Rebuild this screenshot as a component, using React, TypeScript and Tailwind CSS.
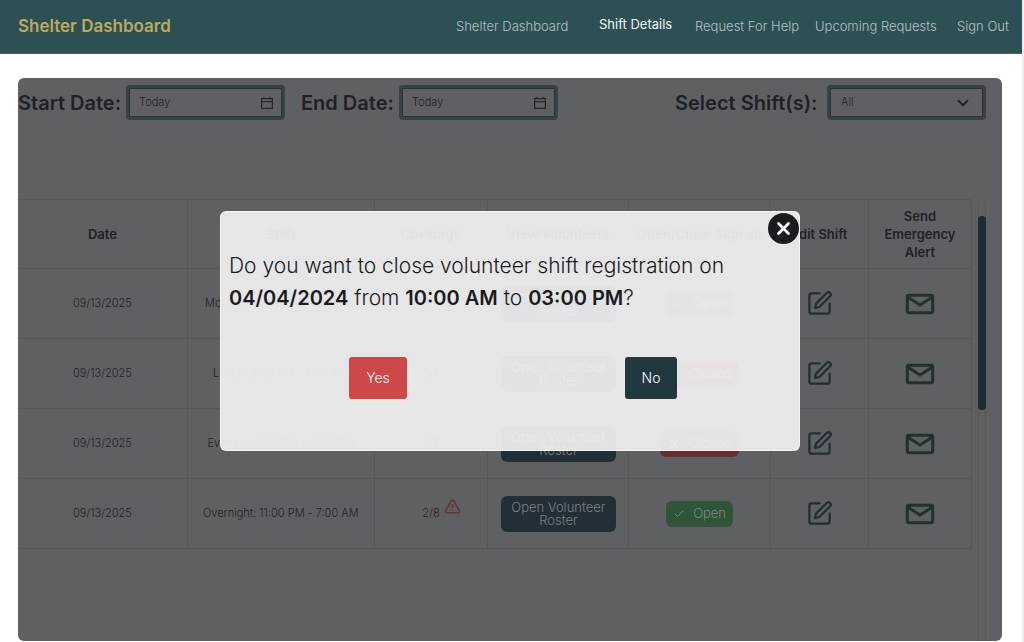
import { Check, ChevronDown, SquarePen, TriangleAlert, X } from "lucide-react";

type Shift = { label: string; coverage: string; open: boolean; alert?: boolean };

const shifts: Shift[] = [
  { label: "Morning: 10:00 AM - 2:00 PM", coverage: "7/8", open: true },
  { label: "Lunch: 2:00 PM - 6:00 PM", coverage: "5/8", open: false },
  { label: "Evening: 6:00 PM - 11:00 PM", coverage: "8/8", open: false },
  { label: "Overnight: 11:00 PM - 7:00 AM", coverage: "2/8", open: true, alert: true },
];

const links = ["Shelter Dashboard", "Shift Details", "Request For Help", "Upcoming Requests", "Sign Out"];

const cell = "h-[70px] border-r border-b border-[#55575b] p-0 text-center";

const field = "h-[35px] w-[159px] rounded border-3 border-[#384147] inset-ring inset-ring-[#28323a]";

function MailIcon() {
  return (
    <svg viewBox="0 0 30 22" className="mx-auto h-[22px] w-[30px]" fill="none" stroke="#22302f" strokeWidth="3">
      <rect x="2.3" y="2.3" width="25.4" height="17.4" rx="1.6" />
      <path d="M2.5 4 15 12 27.5 4" />
    </svg>
  );
}

function CalendarIcon() {
  return (
    <svg viewBox="0 0 14 14" className="size-[14px] shrink-0" fill="none" stroke="#25282c" strokeWidth="1.2">
      <rect x="1.6" y="2.6" width="10.8" height="9.8" />
      <path d="M1.6 5.6h10.8M4 .8v1.8M10 .8v1.8" />
    </svg>
  );
}

function DateField({ id }: { id: string }) {
  return (
    <div className={`${field} flex items-center pr-2 pl-[10px]`}>
      <input
        id={id}
        type="text"
        defaultValue="Today"
        className="w-full min-w-0 bg-transparent text-[11px] font-light text-[#202226] outline-none"
      />
      <CalendarIcon />
    </div>
  );
}

function Header() {
  return (
    <header className="flex h-[54px] items-center justify-between border-b border-[#496668] bg-[#2d5054] pl-[18px]">
      <h1 className="pt-px text-[17px] font-semibold text-[#b9ab5f]">Shelter Dashboard</h1>
      <nav className="grid grid-cols-[143px_96px_120px_142px_65px] items-center text-[13px] font-light whitespace-nowrap text-[#b5c0c5]">
        {links.map((link) => (
          <a
            key={link}
            href="#"
            className={link === "Shift Details" ? "pb-1 font-normal text-[#eef5f5]" : ""}
          >
            {link}
          </a>
        ))}
      </nav>
    </header>
  );
}

function Filters() {
  return (
    <div className="flex items-center justify-between pt-[7px] pr-4 text-[20px] font-semibold whitespace-nowrap text-[#1f2126]">
      <div className="flex items-center">
        <label htmlFor="start" className="w-[108px]">Start Date:</label>
        <DateField id="start" />
        <label htmlFor="end" className="ml-4 w-[98px]">End Date:</label>
        <DateField id="end" />
      </div>
      <div className="flex items-center">
        <label htmlFor="shift" className="w-[152px]">Select Shift(s):</label>
        <div className="relative">
          <select
            id="shift"
            className={`${field} block appearance-none bg-transparent pl-[11px] text-[11px] font-light text-[#202226] outline-none`}
          >
            <option>All</option>
          </select>
          <ChevronDown size={18} strokeWidth={2.5} className="pointer-events-none absolute top-[9px] right-[14px] text-[#202226]" />
        </div>
      </div>
    </div>
  );
}

function ShiftTable() {
  return (
    <table className="w-full flex-1 table-fixed border-separate border-spacing-0 text-[#1f2126]">
      <colgroup>
        <col className="w-[17.8%]" />
        <col className="w-[19.6%]" />
        <col className="w-[11.9%]" />
        <col className="w-[14.8%]" />
        <col className="w-[14.8%]" />
        <col className="w-[10.3%]" />
        <col className="w-[10.8%]" />
      </colgroup>
      <thead>
        <tr className="text-[13px] leading-[18px]">
          {["Date", "Shift", "Coverage", "View Volunteers", "Open/Close Sign up", "Edit Shift"].map((h) => (
            <th key={h} className={`${cell} border-t font-semibold`}>{h}</th>
          ))}
          <th className={`${cell} rounded-tr border-t px-3 font-semibold`}>Send Emergency Alert</th>
        </tr>
      </thead>
      <tbody>
        {shifts.map((s) => (
          <tr key={s.label} className="text-[11px] font-light">
            <td className={cell}>09/13/2025</td>
            <td className={cell}>{s.label}</td>
            <td className={cell}>
              <span className="relative">
                {s.coverage}
                {s.alert && (
                  <TriangleAlert size={17} className="absolute -top-2 left-full ml-1 text-[#6b2d30]" aria-label="Low coverage" />
                )}
              </span>
            </td>
            <td className={cell}>
              <button className="h-9 w-[115px] rounded-md bg-[#222f35] px-2 text-[13px] leading-[13px] font-light text-[#7b8084]">
                Open Volunteer Roster
              </button>
            </td>
            <td className={cell}>
              {s.open ? (
                <button className="inline-flex h-[26px] items-center gap-2 rounded-md bg-[#2f5438] px-[7px] text-[13px] font-light text-[#7b8a80]">
                  <Check size={12} />Open
                </button>
              ) : (
                <button className="inline-flex h-[26px] items-center gap-2 rounded-md bg-[#6b2d2f] px-[7px] text-[13px] font-light text-[#8e7b7d]">
                  <X size={14} />Closed
                </button>
              )}
            </td>
            <td className={cell}>
              <button aria-label="Edit shift" className="mx-auto block">
                <SquarePen size={27} className="text-[#222d34]" />
              </button>
            </td>
            <td className={cell}>
              <button aria-label="Send emergency alert" className="mx-auto block">
                <MailIcon />
              </button>
            </td>
          </tr>
        ))}
      </tbody>
    </table>
  );
}

function ConfirmDialog() {
  return (
    <div
      role="dialog"
      aria-label="Close registration"
      className="relative h-60 w-[580px] rounded-md border border-white/60 bg-[#f2f2f2]/92 px-2 pt-[38px] text-[#1a1b20]"
    >
      <button aria-label="Close" className="absolute top-0 right-0">
        <svg viewBox="0 0 32 32" className="size-8">
          <circle cx="16.5" cy="16.5" r="15.5" fill="#1a1b20" />
          <path d="M11.5 11.5 21.5 21.5M21.5 11.5 11.5 21.5" stroke="#fff" strokeWidth="2.8" strokeLinecap="round" />
        </svg>
      </button>
      <p className="text-[21px] leading-8 font-light">
        Do you want to close volunteer shift registration on{" "}
        <b className="text-[20px] font-semibold">04/04/2024</b> from{" "}
        <b className="text-[20px] font-semibold">10:00 AM</b> to{" "}
        <b className="text-[20px] font-semibold">03:00 PM</b>?
      </p>
      <div className="flex justify-between pt-[43px] pr-[114px] pl-[120px] text-sm font-light text-white">
        <button className="h-[42px] w-[58px] rounded-[3px] bg-[#ce4848]">Yes</button>
        <button className="h-[42px] w-[52px] rounded-[3px] bg-[#213841]">No</button>
      </div>
    </div>
  );
}

export default function App() {
  return (
    <div className="flex min-h-screen flex-col border-r-2 border-[#eeeeee] bg-white font-['Inter','Liberation_Sans',sans-serif]">
      <Header />
      <main className="relative mt-6 mr-5 mb-px ml-[18px] flex flex-1 flex-col overflow-hidden rounded-md bg-[#5f6064]">
        <Filters />
        <div className="mt-[78px] flex flex-1 items-start gap-[6px] pr-4">
          <div className="flex-1 pt-px">
            <ShiftTable />
          </div>
          <div className="mt-1 w-2 self-stretch border-x border-[#56585c] pt-[14px]">
            <div className="-mx-px h-[194px] rounded bg-[#1f2a33]" />
          </div>
        </div>
        <div className="absolute inset-0 flex items-start justify-center pt-[133px]">
          <ConfirmDialog />
        </div>
      </main>
    </div>
  );
}
